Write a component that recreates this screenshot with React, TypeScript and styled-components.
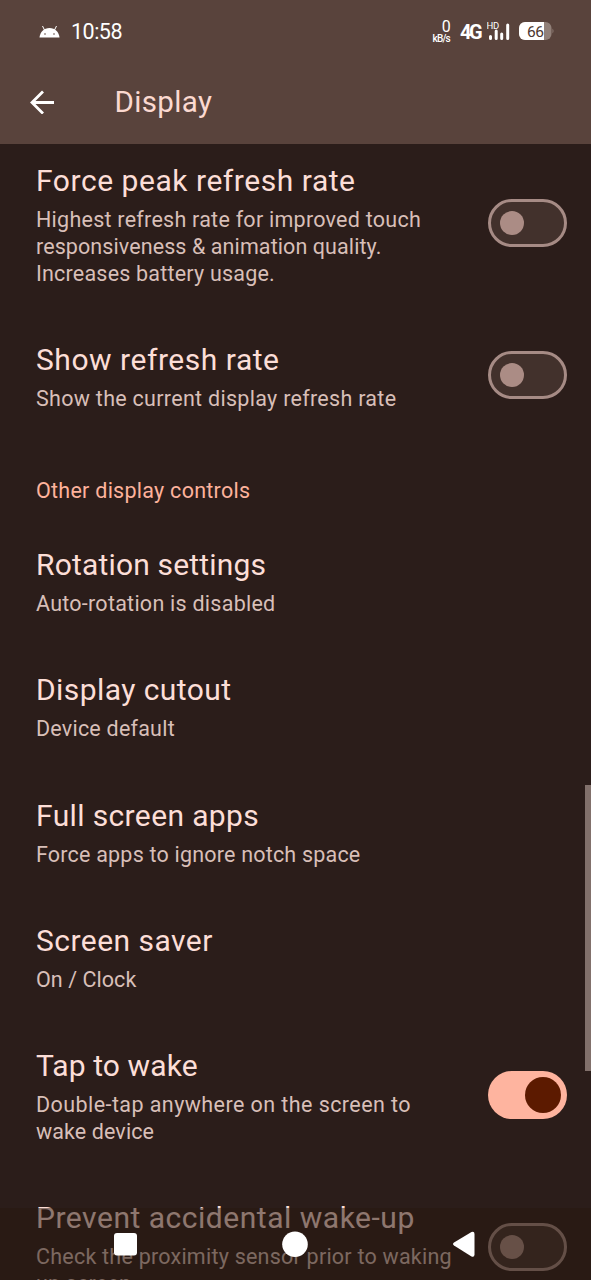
import React from "react";
import styled, { createGlobalStyle } from "styled-components";

const Global = createGlobalStyle`
  * { box-sizing: border-box; }
  body { margin: 0; background: #2b1d1a; font-family: Roboto, "Liberation Sans", sans-serif; }
`;

const Screen = styled.div`
  position: relative;
  width: 591px;
  height: 1280px;
  overflow: hidden;
  background: #2b1d1a;
`;

const Header = styled.header`
  position: relative;
  z-index: 1;
  height: 144px;
  background: #59433c;
`;

const StatusBar = styled.div`
  display: flex;
  align-items: center;
  height: 62px;
  padding: 0 37px 0 39px;
  color: #fff;
`;

const Clock = styled.span`
  margin-left: 11px;
  padding-top: 1px;
  font-size: 21.5px;
  line-height: 26px;
  letter-spacing: -0.5px;
`;

const StatusIcons = styled.div`
  display: flex;
  align-items: center;
  margin-left: auto;
`;

const NetSpeed = styled.div`
  display: flex;
  flex-direction: column;
  align-items: flex-end;
  margin-right: 10px;
  padding-top: 2px;
  font-size: 10px;
  font-weight: 500;
  line-height: 10px;
  letter-spacing: -0.75px;
`;

const NetValue = styled.span`
  font-size: 16px;
  font-weight: 400;
  line-height: 14px;
`;

const NetType = styled.span`
  width: 21px;
  margin-right: 6px;
  padding-top: 1px;
  font-size: 20px;
  font-weight: 700;
  letter-spacing: -2.4px;
  line-height: 24px;
`;

const SignalIcon = styled.svg`
  display: block;
  margin-right: 8px;
`;

const Toolbar = styled.div`
  display: flex;
  align-items: center;
  height: 80px;
  padding-left: 30px;
`;

const PageTitle = styled.h1`
  margin: 0 0 0 59.5px;
  color: #fbd9d0;
  font-size: 29.5px;
  font-weight: 400;
  line-height: 40px;
  letter-spacing: 0.35px;
`;

const List = styled.main`
  margin-top: -10.5px;
`;

const Row = styled.section`
  display: flex;
  align-items: center;
  justify-content: space-between;
  padding: 26.05px 24px 26.05px 36px;
`;

const RowTitle = styled.div<{ $track: number }>`
  padding-top: 1px;
  color: #fcded7;
  font-size: 30px;
  line-height: 40px;
  letter-spacing: ${(p) => p.$track}px;
  white-space: nowrap;
`;

const Summary = styled.div`
  margin-top: 5px;
`;

const SummaryLine = styled.div<{ $track: number }>`
  color: #d8bfb8;
  font-size: 21.5px;
  line-height: 27px;
  letter-spacing: ${(p) => p.$track}px;
  white-space: nowrap;
`;

const Category = styled.h2`
  margin: 0;
  padding: 39.2px 36px 14.4px;
  color: #fdb29c;
  font-size: 21.5px;
  font-weight: 400;
  line-height: 27px;
  letter-spacing: 0.26px;
`;

const Track = styled.div<{ $on?: boolean }>`
  display: flex;
  flex: none;
  align-items: center;
  justify-content: ${(p) => (p.$on ? "flex-end" : "flex-start")};
  width: 79px;
  height: 48px;
  padding: ${(p) => (p.$on ? "0 6px" : "0 9.4px")};
  border: ${(p) => (p.$on ? "0" : "3px solid #a68b85")};
  border-radius: 24px;
  background: ${(p) => (p.$on ? "#feb49f" : "#42312c")};
`;

const Thumb = styled.div<{ $on?: boolean }>`
  width: ${(p) => (p.$on ? 36 : 24)}px;
  height: ${(p) => (p.$on ? 36 : 24)}px;
  border-radius: 50%;
  background: ${(p) => (p.$on ? "#5c1a00" : "#ab8c85")};
`;

const ScrollThumb = styled.div`
  position: absolute;
  top: 785px;
  right: 0;
  width: 6px;
  height: 286px;
  background: #81706b;
`;

const NavBar = styled.nav`
  position: absolute;
  left: 0;
  right: 0;
  bottom: 0;
  display: flex;
  align-items: center;
  height: 72px;
  padding-left: 113px;
  background: rgba(41, 24, 16, 0.52);
`;

type Line = [text: string, track: number];

interface SettingProps {
  title: Line;
  lines: Line[];
  toggle?: "on" | "off";
}

function Setting({ title, lines, toggle }: SettingProps) {
  const on = toggle === "on";
  return (
    <Row>
      <div>
        <RowTitle $track={title[1]}>{title[0]}</RowTitle>
        <Summary>
          {lines.map(([text, track]) => (
            <SummaryLine key={text} $track={track}>{text}</SummaryLine>
          ))}
        </Summary>
      </div>
      {toggle && (
        <Track $on={on}>
          <Thumb $on={on} />
        </Track>
      )}
    </Row>
  );
}

export default function App() {
  return (
    <Screen>
      <Global />
      <Header>
        <StatusBar>
          <svg width="21" height="13" viewBox="0 0 21 13">
            <path d="M.5 12.500C1 7 5 3 10.500 3S20 7 20.500 12.500Z" fill="#fff" />
            <path d="M5.500 5 3.500 1M15.500 5l2-4" stroke="#fff" strokeWidth="1" />
            <circle cx="6" cy="9" r=".8" fill="#59433c" />
            <circle cx="15" cy="9" r=".8" fill="#59433c" />
          </svg>
          <Clock>10:58</Clock>
          <StatusIcons>
            <NetSpeed>
              <NetValue>0</NetValue>
              <span>kB/s</span>
            </NetSpeed>
            <NetType>4G</NetType>
            <SignalIcon width="24" height="20" viewBox="0 0 24 20">
              <text x="-.5" y="7.800" fontSize="9.500" fontFamily="Roboto, sans-serif" letterSpacing="-.3" fill="#fff">HD</text>
              <path d="M3.500 15.500v2M9.200 10v7.500M14.700 13v4.500M20.700 4v13.500" stroke="#fff" strokeWidth="3" strokeLinecap="round" />
            </SignalIcon>
            <svg width="35" height="18" viewBox="0 0 35 18">
              <rect x="0" y="0" width="32.500" height="18" rx="6" fill="#918079" />
              <path d="M6 0H25V18H6A6 6 0 0 1 0 12V6A6 6 0 0 1 6 0Z" fill="#fff" />
              <path d="M33.500 6.500q2 2.500 0 5Z" fill="#918079" />
              <text x="8" y="14.700" fontSize="15.500" fontFamily="Roboto, sans-serif" letterSpacing="-.5" fill="#4d3831">66</text>
            </svg>
          </StatusIcons>
        </StatusBar>
        <Toolbar>
          <svg width="25" height="24" viewBox="0 0 25 24" fill="none" stroke="#fff" strokeWidth="2.800">
            <path d="M24 12.500H2.500M13 1.500 2 12.500l11 11" />
          </svg>
          <PageTitle>Display</PageTitle>
        </Toolbar>
      </Header>
      <List>
        <Setting
          title={["Force peak refresh rate", 0.54]}
          lines={[
            ["Highest refresh rate for improved touch", 0.25],
            ["responsiveness & animation quality.", 0.09],
            ["Increases battery usage.", 0.2],
          ]}
          toggle="off"
        />
        <Setting title={["Show refresh rate", 0.53]} lines={[["Show the current display refresh rate", 0.29]]} toggle="off" />
        <Category>Other display controls</Category>
        <Setting title={["Rotation settings", 0.18]} lines={[["Auto-rotation is disabled", 0.25]]} />
        <Setting title={["Display cutout", 0.42]} lines={[["Device default", 0.22]]} />
        <Setting title={["Full screen apps", 0.37]} lines={[["Force apps to ignore notch space", 0.2]]} />
        <Setting title={["Screen saver", 0.47]} lines={[["On / Clock", 0.05]]} />
        <Setting
          title={["Tap to wake", 0.1]}
          lines={[["Double-tap anywhere on the screen to", 0.43], ["wake device", 0.1]]}
          toggle="on"
        />
        <Setting
          title={["Prevent accidental wake-up", 0.52]}
          lines={[["Check the proximity sensor prior to waking", 0.23], ["up screen", 0.2]]}
          toggle="off"
        />
      </List>
      <ScrollThumb />
      <NavBar>
        <svg width="364" height="28" viewBox="0 0 364 28" fill="#fff">
          <rect x="1" y="3" width="23" height="22.500" rx="3" />
          <circle cx="182" cy="14.200" r="12.800" />
          <path d="M341 12.500 358.500 2q3-1 3 2V24.500q0 3-3 2L341 15.500q-2-1.500 0-3Z" />
        </svg>
      </NavBar>
    </Screen>
  );
}
